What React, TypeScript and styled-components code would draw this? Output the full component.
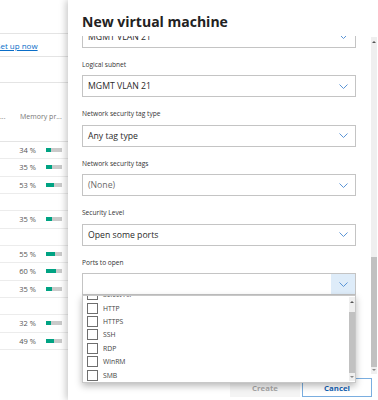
import styled, { createGlobalStyle } from "styled-components";

const GlobalStyle = createGlobalStyle`
  html, body {
    margin: 0;
    padding: 0;
    background: #fff;
  }
  body {
    font-family: "Open Sans", "Noto Sans", sans-serif;
    color: #333;
    overflow: hidden;
  }
`;

const Screen = styled.div`
  display: flex;
  width: 378px;
  height: 400px;
  overflow: hidden;
  background: #fff;
`;

/* ---- page behind the flyout ---- */

const Page = styled.div`
  width: 68px;
  flex: none;
  display: flex;
  flex-direction: column;
  overflow: hidden;
`;

const Band = styled.div<{ $h: number }>`
  height: ${(p) => p.$h}px;
  flex: none;
  border-bottom: 1px solid #e4e4e4;
  display: flex;
  align-items: center;
  white-space: nowrap;
`;

const LinkText = styled.span`
  margin-left: -4px;
  font-size: 8px;
  color: #0a6ec8;
  text-decoration: underline;
`;

const HeaderBand = styled(Band)`
  align-items: flex-end;
  padding-bottom: 20px;
  box-sizing: border-box;
  font-size: 7px;
  color: #777;
`;

const HeadCell = styled.span<{ $w: number }>`
  width: ${(p) => p.$w}px;
  flex: none;
`;

const DataRow = styled.div`
  height: 17.33px;
  flex: none;
  box-sizing: border-box;
  border-bottom: 1px solid #ececec;
  display: grid;
  grid-template-columns: 36px 16px;
  column-gap: 10px;
  align-items: center;
  font-size: 7.5px;
  color: #555;
`;

const Pct = styled.span`
  text-align: right;
`;

const Bar = styled.div`
  height: 4px;
  background: #cacaca;
  display: flex;
`;

const BarFill = styled.div`
  background: #00a383;
`;

/* ---- flyout panel ---- */

const Panel = styled.div`
  flex: 1;
  display: flex;
  flex-direction: column;
  background: #fff;
  position: relative;
  z-index: 1;
  box-shadow: -2px 0 7px rgba(0, 0, 0, 0.22);
`;

const PanelHeader = styled.div`
  height: 36px;
  flex: none;
  box-sizing: border-box;
  padding: 12px 0 0 14px;
  background: #fff;
  position: relative;
  z-index: 2;
`;

const Title = styled.h1`
  margin: 0;
  font-size: 14px;
  line-height: 20px;
  font-weight: 700;
  color: #222;
`;

const Body = styled.div`
  height: 339px;
  flex: none;
  display: flex;
`;

const Content = styled.div`
  flex: 1;
  padding: 0 15px 0 14px;
`;

const Inner = styled.div`
  margin-top: -10.5px;
`;

const Label = styled.div`
  margin: 11px 0 4.5px;
  font-size: 6.6px;
  line-height: 12px;
  color: #333;
`;

const SelectWrap = styled.div`
  position: relative;
`;

const SelectBox = styled.div`
  height: 22px;
  box-sizing: border-box;
  border: 1px solid #c4c4c4;
  display: flex;
  align-items: center;
  padding-left: 5px;
  font-size: 8.7px;
`;

const Value = styled.span<{ $muted?: boolean }>`
  flex: 1;
  color: ${(p) => (p.$muted ? "#6b6b6b" : "#2b2b2b")};
`;

const ChevronCell = styled.div<{ $active?: boolean }>`
  width: 24px;
  align-self: stretch;
  display: flex;
  align-items: center;
  justify-content: center;
  background: ${(p) => (p.$active ? "#deecf9" : "transparent")};
`;

const DropList = styled.div`
  position: absolute;
  top: 100%;
  left: 0;
  right: 0;
  height: 88px;
  box-sizing: border-box;
  background: #fff;
  border: 1px solid #c8c8c8;
  box-shadow: 0 3px 7px rgba(0, 0, 0, 0.28);
  display: flex;
  overflow: hidden;
  z-index: 3;
`;

const Items = styled.div`
  flex: 1;
  margin-top: -8px;
  padding-left: 4px;
`;

const Item = styled.div`
  height: 13.4px;
  display: flex;
  align-items: center;
  gap: 5px;
  font-size: 6.8px;
  color: #444;
`;

const Check = styled.span`
  width: 11px;
  height: 11px;
  box-sizing: border-box;
  border: 1px solid #6e6e6e;
  background: #fff;
  flex: none;
`;

const Track = styled.div<{ $m: string }>`
  width: 6px;
  flex: none;
  margin: ${(p) => p.$m};
  background: #efefef;
  display: flex;
  flex-direction: column;
  align-items: center;
`;

const Arrow = styled.span<{ $down?: boolean }>`
  width: 0;
  height: 0;
  flex: none;
  border-left: 2px solid transparent;
  border-right: 2px solid transparent;
  ${(p) =>
    p.$down
      ? "border-top: 2px solid #8a8a8a; margin: auto 0 3px;"
      : "border-bottom: 2px solid #555; margin-top: 4px;"}
`;

const Thumb = styled.div<{ $top: number; $h: number }>`
  width: 100%;
  flex: none;
  margin-top: ${(p) => p.$top}px;
  height: ${(p) => p.$h}px;
  background: #c1c1c1;
`;

const Footer = styled.div`
  display: flex;
  justify-content: flex-end;
  gap: 2px;
  padding: 3px 6px 0 0;
`;

const Button = styled.button<{ $primary?: boolean }>`
  width: 70px;
  height: 19px;
  box-sizing: border-box;
  font-family: inherit;
  font-size: 7.8px;
  font-weight: 700;
  padding: 0;
  ${(p) =>
    p.$primary
      ? "background: #f4f4f4; color: #a8a8a8; border: none;"
      : "background: #fff; color: #1563b5; border: 1px solid #7aaee0;"}
`;

const Chevron = () => (
  <svg width="9" height="5" viewBox="0 0 9 5">
    <polyline
      points="0.5,0.5 4.5,4.5 8.5,0.5"
      fill="none"
      stroke="#5b95d6"
      strokeWidth="1"
    />
  </svg>
);

const Select = ({
  value,
  muted,
  active,
  children,
}: {
  value: string;
  muted?: boolean;
  active?: boolean;
  children?: React.ReactNode;
}) => (
  <SelectWrap>
    <SelectBox>
      <Value $muted={muted}>{value}</Value>
      <ChevronCell $active={active}>
        <Chevron />
      </ChevronCell>
    </SelectBox>
    {children}
  </SelectWrap>
);

const rows: (number | null)[] = [34, 35, 53, null, 35, null, 55, 60, 35, null, 32, 49];
const ports = ["Select All", "HTTP", "HTTPS", "SSH", "RDP", "WinRM", "SMB"];

export default function App() {
  return (
    <>
      <GlobalStyle />
      <Screen>
        <Page>
          <Band $h={33} />
          <Band $h={22}>
            <LinkText>Set up now</LinkText>
          </Band>
          <Band $h={25} />
          <HeaderBand $h={59}>
            <HeadCell $w={20}>...</HeadCell>
            <span>Memory pr...</span>
          </HeaderBand>
          {rows.map((r, i) => (
            <DataRow key={i}>
              {r !== null && (
                <>
                  <Pct>{r} %</Pct>
                  <Bar>
                    <BarFill style={{ width: `${r}%` }} />
                  </Bar>
                </>
              )}
            </DataRow>
          ))}
        </Page>

        <Panel>
          <PanelHeader>
            <Title>New virtual machine</Title>
          </PanelHeader>
          <Body>
            <Content>
              <Inner>
                <Select value="MGMT VLAN 21" />
                <Label>Logical subnet</Label>
                <Select value="MGMT VLAN 21" />
                <Label>Network security tag type</Label>
                <Select value="Any tag type" />
                <Label>Network security tags</Label>
                <Select value="(None)" muted />
                <Label>Security Level</Label>
                <Select value="Open some ports" />
                <Label>Ports to open</Label>
                <Select value="" active>
                  <DropList>
                    <Items>
                      {ports.map((p) => (
                        <Item key={p}>
                          <Check />
                          {p}
                        </Item>
                      ))}
                    </Items>
                    <Track $m="1px 0">
                      <Arrow />
                      <Thumb $top={9} $h={61} />
                      <Arrow $down />
                    </Track>
                  </DropList>
                </Select>
              </Inner>
            </Content>
            <Track $m="1px 1px 1px 0">
              <Arrow />
              <Thumb $top={214} $h={110} />
              <Arrow $down />
            </Track>
          </Body>
          <Footer>
            <Button $primary>Create</Button>
            <Button>Cancel</Button>
          </Footer>
        </Panel>
      </Screen>
    </>
  );
}
